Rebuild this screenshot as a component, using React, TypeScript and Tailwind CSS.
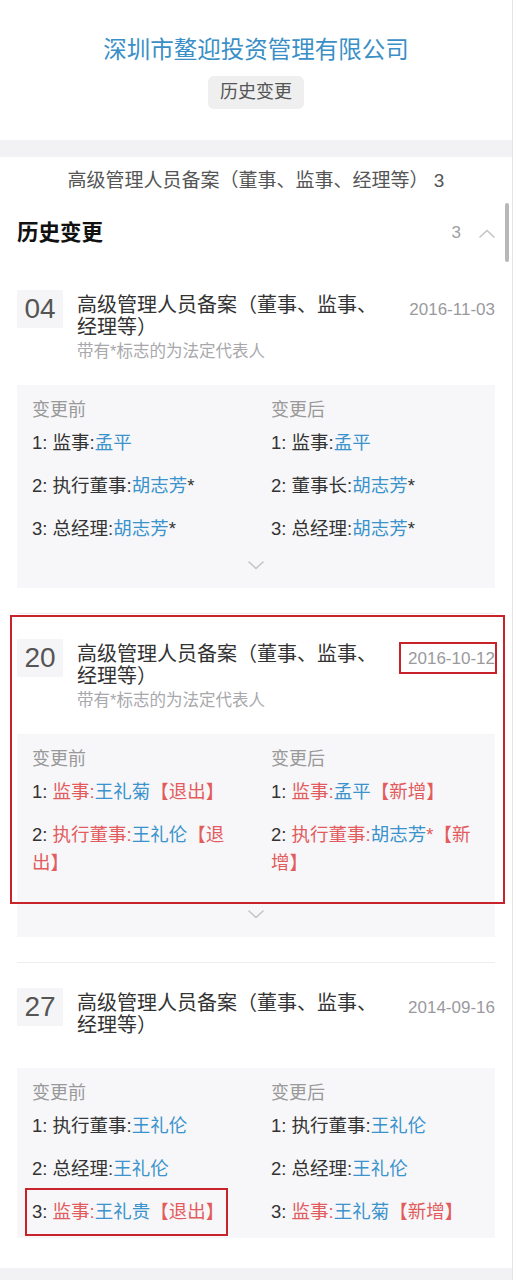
import React from 'react';

type Row = { role: string; name: string; star?: boolean; tag?: '退出' | '新增' };

type Record = {
  no: string;
  date: string;
  legal: boolean;
  before: Row[];
  after: Row[];
  more: boolean;
  marked?: boolean;
};

const records: Record[] = [
  {
    no: '04',
    date: '2016-11-03',
    legal: true,
    more: true,
    before: [
      { role: '监事', name: '孟平' },
      { role: '执行董事', name: '胡志芳', star: true },
      { role: '总经理', name: '胡志芳', star: true },
    ],
    after: [
      { role: '监事', name: '孟平' },
      { role: '董事长', name: '胡志芳', star: true },
      { role: '总经理', name: '胡志芳', star: true },
    ],
  },
  {
    no: '20',
    date: '2016-10-12',
    legal: true,
    more: true,
    marked: true,
    before: [
      { role: '监事', name: '王礼菊', tag: '退出' },
      { role: '执行董事', name: '王礼伦', tag: '退出' },
    ],
    after: [
      { role: '监事', name: '孟平', tag: '新增' },
      { role: '执行董事', name: '胡志芳', star: true, tag: '新增' },
    ],
  },
  {
    no: '27',
    date: '2014-09-16',
    legal: false,
    more: false,
    before: [
      { role: '执行董事', name: '王礼伦' },
      { role: '总经理', name: '王礼伦' },
      { role: '监事', name: '王礼贵', tag: '退出' },
    ],
    after: [
      { role: '执行董事', name: '王礼伦' },
      { role: '总经理', name: '王礼伦' },
      { role: '监事', name: '王礼菊', tag: '新增' },
    ],
  },
];

const font = { fontFamily: '"Liberation Sans", "Noto Sans CJK SC", sans-serif' };

function Chevron({ up }: { up?: boolean }) {
  return (
    <svg width="16" height="9" viewBox="0 0 16 9" fill="none">
      <polyline
        points={up ? '1,8 8,1.5 15,8' : '1,1 8,7.5 15,1'}
        stroke="#c4c4c8"
        strokeWidth="1.6"
        strokeLinejoin="round"
        strokeLinecap="round"
      />
    </svg>
  );
}

function ChangeRow({ idx, row, boxed }: { idx: number; row: Row; boxed?: boolean }) {
  const changed = !!row.tag;
  return (
    <div className="relative text-[18.5px] leading-[28px] text-[#333]">
      {idx}:{' '}
      <span className={changed ? 'text-[#e25c5e]' : ''}>{row.role}:</span>
      <span className="text-[#3a93cc]">{row.name}</span>
      {row.star && <span className={changed ? 'text-[#e25c5e]' : ''}>*</span>}
      {row.tag && <span className="text-[#e25c5e]">【{row.tag}】</span>}
      {boxed && (
        <span className="pointer-events-none absolute -left-[7px] -top-[10px] h-[48px] w-[203px] border-2 border-[#c8232b]" />
      )}
    </div>
  );
}

function RecordItem({ rec, first }: { rec: Record; first: boolean }) {
  return (
    <div className={`relative pt-[25px] pb-[25px] ${first ? '' : 'border-t border-[#ededf0]'}`}>
      {rec.marked && (
        <div className="pointer-events-none absolute -left-[7px] top-[1px] h-[289px] w-[495px] border-2 border-[#c8232b]" />
      )}

      <div className="flex items-start">
        <div className="flex h-[38px] w-[46px] shrink-0 items-center justify-center bg-[#f5f5f7] text-[28px] text-[#555]">
          {rec.no}
        </div>
        <div className="ml-[14px] min-h-[59px] w-[305px] pt-[4px]">
          <div className="text-[20px] leading-[22px] text-[#333]">高级管理人员备案（董事、监事、经理等）</div>
          {rec.legal && (
            <div className="text-[16.5px] leading-[26px] text-[#a8a8ac]">带有*标志的为法定代表人</div>
          )}
        </div>
        <div className="relative ml-auto mt-[9px] text-[17px] leading-[22px] text-[#9a9a9e]">
          {rec.date}
          {rec.marked && (
            <span className="pointer-events-none absolute -left-[9px] -right-[2px] -top-[6px] -bottom-[4px] border-2 border-[#c8232b]" />
          )}
        </div>
      </div>

      {/* collapsed preview keeps a fixed height, with the expand arrow at its foot */}
      <div
        className={`mt-[21px] flex flex-col bg-[#f7f7f9] px-[15px] pt-[14px] ${
          rec.more ? 'h-[203px]' : 'pb-[12px]'
        }`}
      >
        <div className="grid grid-cols-2 gap-x-[30px] text-[18px] leading-[22px] text-[#999]">
          <div>变更前</div>
          <div>变更后</div>
        </div>
        <div className="mt-[8px] grid grid-cols-2 gap-x-[30px] gap-y-[15px]">
          {rec.before.map((row, i) => (
            <React.Fragment key={i}>
              <ChangeRow idx={i + 1} row={row} boxed={rec.no === '27' && i === 2} />
              <ChangeRow idx={i + 1} row={rec.after[i]} />
            </React.Fragment>
          ))}
        </div>
        {rec.more && (
          <div className="mt-auto flex h-[46px] items-center justify-center">
            <Chevron />
          </div>
        )}
      </div>
    </div>
  );
}

export default function App() {
  return (
    <div className="min-h-screen bg-white" style={font}>
      <div className="relative w-[513px] border-r border-[#e4e4e6] bg-white">
        {/* company header */}
        <div className="flex flex-col items-center pt-[35px] pb-[31px]">
          <div className="text-[23.5px] leading-[30px] text-[#3b8fc7]">深圳市鳌迎投资管理有限公司</div>
          <div className="mt-[11px] flex h-[33px] items-center rounded-[6px] bg-[#efeff0] px-[12px] text-[18px] text-[#555]">
            历史变更
          </div>
        </div>

        <div className="h-[17px] bg-[#f2f2f5]" />

        <div className="flex h-[48px] items-center justify-center text-[19px] text-[#555]">
          高级管理人员备案（董事、监事、经理等） 3
        </div>

        {/* section header */}
        <div className="flex items-center justify-between px-[17px] pt-[13px] pb-[17px]">
          <div className="text-[21.5px] font-bold leading-[30px] text-[#111]">历史变更</div>
          <div className="flex items-center gap-[18px] text-[17px] text-[#a0a0a4]">
            <span>3</span>
            <Chevron up />
          </div>
        </div>

        <div className="px-[17px]">
          {records.map((rec, i) => (
            <RecordItem key={rec.no} rec={rec} first={i === 0} />
          ))}
        </div>

        <div className="mt-[5px] h-[20px] bg-[#f2f2f5]" />

        {/* scroll indicator */}
        <div className="absolute left-[505px] top-[203px] h-[59px] w-[4px] rounded-full bg-[#b8b8bb]" />
      </div>
    </div>
  );
}
